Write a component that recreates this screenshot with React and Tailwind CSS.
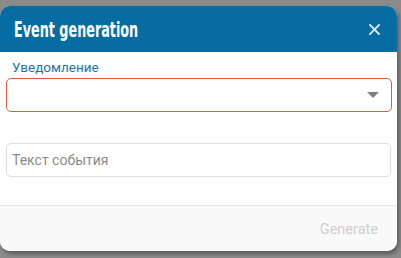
import React from 'react';

const App = () => {
  return (
    <div className="w-[401px] h-[258px] bg-[#8b8b8b] pt-[6px] overflow-hidden" style={{ fontFamily: 'Roboto, "Liberation Sans", sans-serif' }}>
      <div className="w-[397px] h-[245px] bg-white rounded-[10px] overflow-hidden flex flex-col shadow-[2px_3px_4px_rgba(0,0,0,0.35)]">
        <div className="h-[46px] bg-[#076ca2] flex items-center justify-between pl-[14px] pr-[17px]">
          <h2
            className="text-white text-[22px] leading-[26px] font-bold origin-left scale-x-[0.645] whitespace-nowrap mt-[1px]"
            style={{ fontFamily: '"DejaVu Sans Condensed", "Liberation Sans", sans-serif' }}
          >
            Event generation
          </h2>
          <svg width="11" height="11" viewBox="0 0 11 11" className="mt-[1px]">
            <path d="M1 1L10 10M10 1L1 10" stroke="#dbe9f2" strokeWidth="1.8" strokeLinecap="square" />
          </svg>
        </div>

        <div className="flex-1 px-[6px] pt-[7px]">
          <label className="block pl-[6px] text-[13.5px] leading-[16px] text-[#1f74ad] mb-[3px]">Уведомление</label>
          <div className="h-[34px] w-[386px] border border-[#e45a3c] rounded-[5px] flex items-center justify-end pr-[12px]">
            <div className="w-0 h-0 border-l-[6px] border-r-[6px] border-t-[6px] border-l-transparent border-r-transparent border-t-[#808080]" />
          </div>
          <div className="h-[34px] w-[385px] mt-[31px] border border-[#dedede] rounded-[5px] flex items-center px-[5px]">
            <input
              type="text"
              placeholder="Текст события"
              className="w-full outline-none text-[14px] placeholder-[#8a8a8a] bg-transparent"
            />
          </div>
        </div>

        <div className="h-[46px] border-t border-[#e3e3e3] bg-[#f9f9f9] flex items-center justify-end pr-[19px] pt-[3px]">
          <button className="text-[14.5px] text-[#cfcfcf]">Generate</button>
        </div>
      </div>
    </div>
  );
};

export default App;
